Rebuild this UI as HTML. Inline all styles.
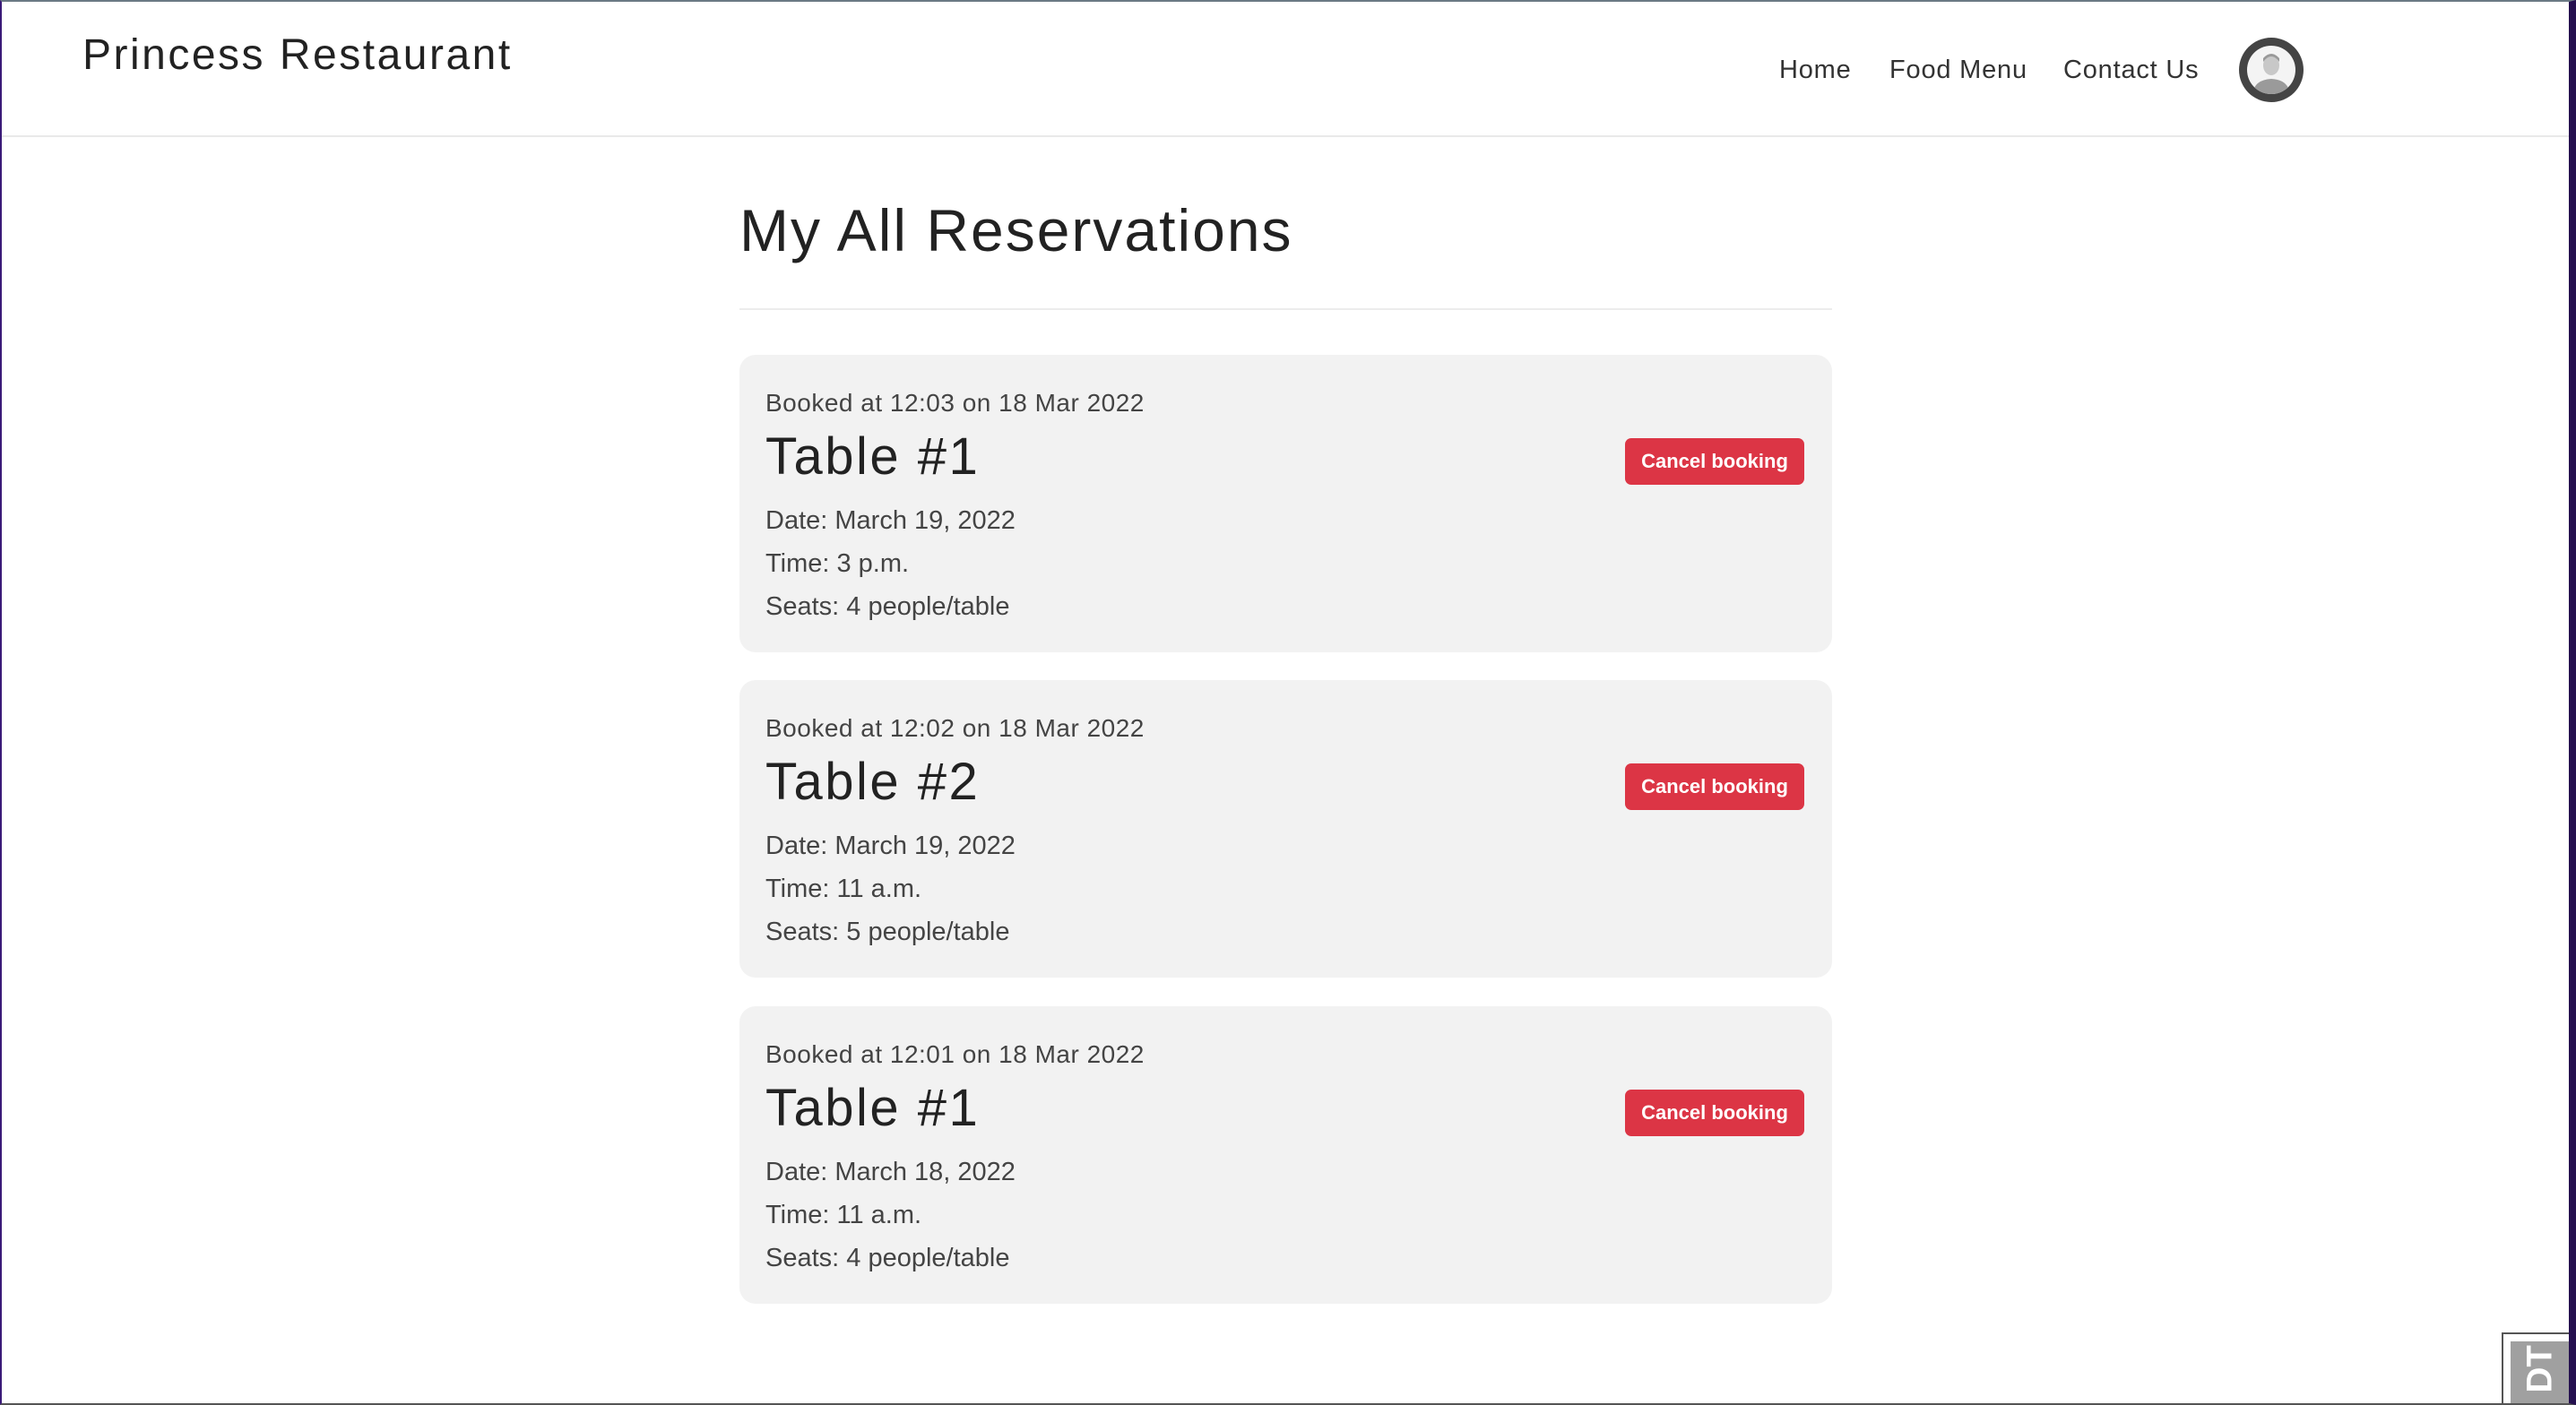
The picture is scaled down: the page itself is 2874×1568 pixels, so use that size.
<!DOCTYPE html>
<html><head><meta charset="utf-8"><style>
*{margin:0;padding:0;box-sizing:border-box}
html,body{width:2874px;height:1568px;overflow:hidden;background:#fff;font-family:"Liberation Sans",sans-serif;color:#212529}
.frame{position:absolute;left:0;top:0;width:2874px;height:1568px;border-left:2px solid #3a1a78;border-right:8px solid #25104f;border-top:2px solid #6b7a84;border-bottom:2px solid #555}
.brand{position:absolute;left:92px;top:34px;font-size:48px;color:#222;white-space:nowrap;letter-spacing:2.5px}
.nav{position:absolute;top:62px;font-size:29px;color:#333;white-space:nowrap;letter-spacing:0.8px}
.avatar{position:absolute;left:2498px;top:42px;width:72px;height:72px;border-radius:50%;background:#444;}
.avatar .in{position:absolute;left:9px;top:9px;width:54px;height:54px;border-radius:50%;background:#f4f4f4;overflow:hidden}
.hline{position:absolute;left:0;top:151px;width:2866px;height:2px;background:#e9e9e9}
h1{position:absolute;left:825px;top:219px;font-size:66px;font-weight:normal;color:#222;white-space:nowrap;letter-spacing:2px}
.hr{position:absolute;left:825px;top:344px;width:1219px;height:2px;background:#ececec}
.card{position:absolute;left:825px;width:1219px;height:332px;background:#f2f2f2;border-radius:18px}
.card .b{position:absolute;left:29px;top:38px;font-size:28px;color:#444;white-space:nowrap;letter-spacing:0.5px}
.card .t{position:absolute;left:29px;top:80px;font-size:58px;color:#222;white-space:nowrap;letter-spacing:2.5px}
.card .l{position:absolute;left:29px;font-size:29px;color:#444;white-space:nowrap}
.btn{position:absolute;left:988px;top:93px;width:200px;height:52px;background:#dc3545;color:#fff;border-radius:7px;font-weight:bold;font-size:22px;text-align:center;line-height:52px}
.dt{position:absolute;left:2791px;top:1487px;width:77px;height:81px;border:2px solid #555;background:#fff}
.dt .g{position:absolute;left:8px;top:8px;right:0;bottom:0;background:#a0a0a0;overflow:hidden}
.dt .g span{position:absolute;left:8px;top:10px;color:#fff;font-weight:bold;font-size:40px;transform:rotate(-90deg);transform-origin:center;display:block;width:50px;text-align:center}
</style></head><body>
<div class="brand">Princess Restaurant</div>
<div class="nav" style="left:1985px">Home</div>
<div class="nav" style="left:2108px">Food Menu</div>
<div class="nav" style="left:2302px">Contact Us</div>
<div class="avatar"><div class="in"><svg width="54" height="54" viewBox="0 0 54 54"><ellipse cx="27" cy="22" rx="9" ry="11" fill="#c8c8c8"/><path d="M18 18 Q27 6 36 18 L36 14 Q27 4 18 14Z" fill="#999"/><path d="M6 54 Q8 38 27 37 Q46 38 48 54Z" fill="#9a9a9a"/></svg></div></div>
<div class="hline"></div>
<h1>My All Reservations</h1>
<div class="hr"></div>

<div class="card" style="top:396px">
<div class="b">Booked at 12:03 on 18 Mar 2022</div>
<div class="t">Table #1</div>
<div class="l" style="top:169px">Date: March 19, 2022</div>
<div class="l" style="top:217px">Time: 3 p.m.</div>
<div class="l" style="top:265px">Seats: 4 people/table</div>
<div class="btn">Cancel booking</div>
</div>
<div class="card" style="top:759px">
<div class="b">Booked at 12:02 on 18 Mar 2022</div>
<div class="t">Table #2</div>
<div class="l" style="top:169px">Date: March 19, 2022</div>
<div class="l" style="top:217px">Time: 11 a.m.</div>
<div class="l" style="top:265px">Seats: 5 people/table</div>
<div class="btn">Cancel booking</div>
</div>
<div class="card" style="top:1123px">
<div class="b">Booked at 12:01 on 18 Mar 2022</div>
<div class="t">Table #1</div>
<div class="l" style="top:169px">Date: March 18, 2022</div>
<div class="l" style="top:217px">Time: 11 a.m.</div>
<div class="l" style="top:265px">Seats: 4 people/table</div>
<div class="btn">Cancel booking</div>
</div>
<div class="dt"><div class="g"><span>DT</span></div></div>
<div class="frame"></div>
</body></html>
